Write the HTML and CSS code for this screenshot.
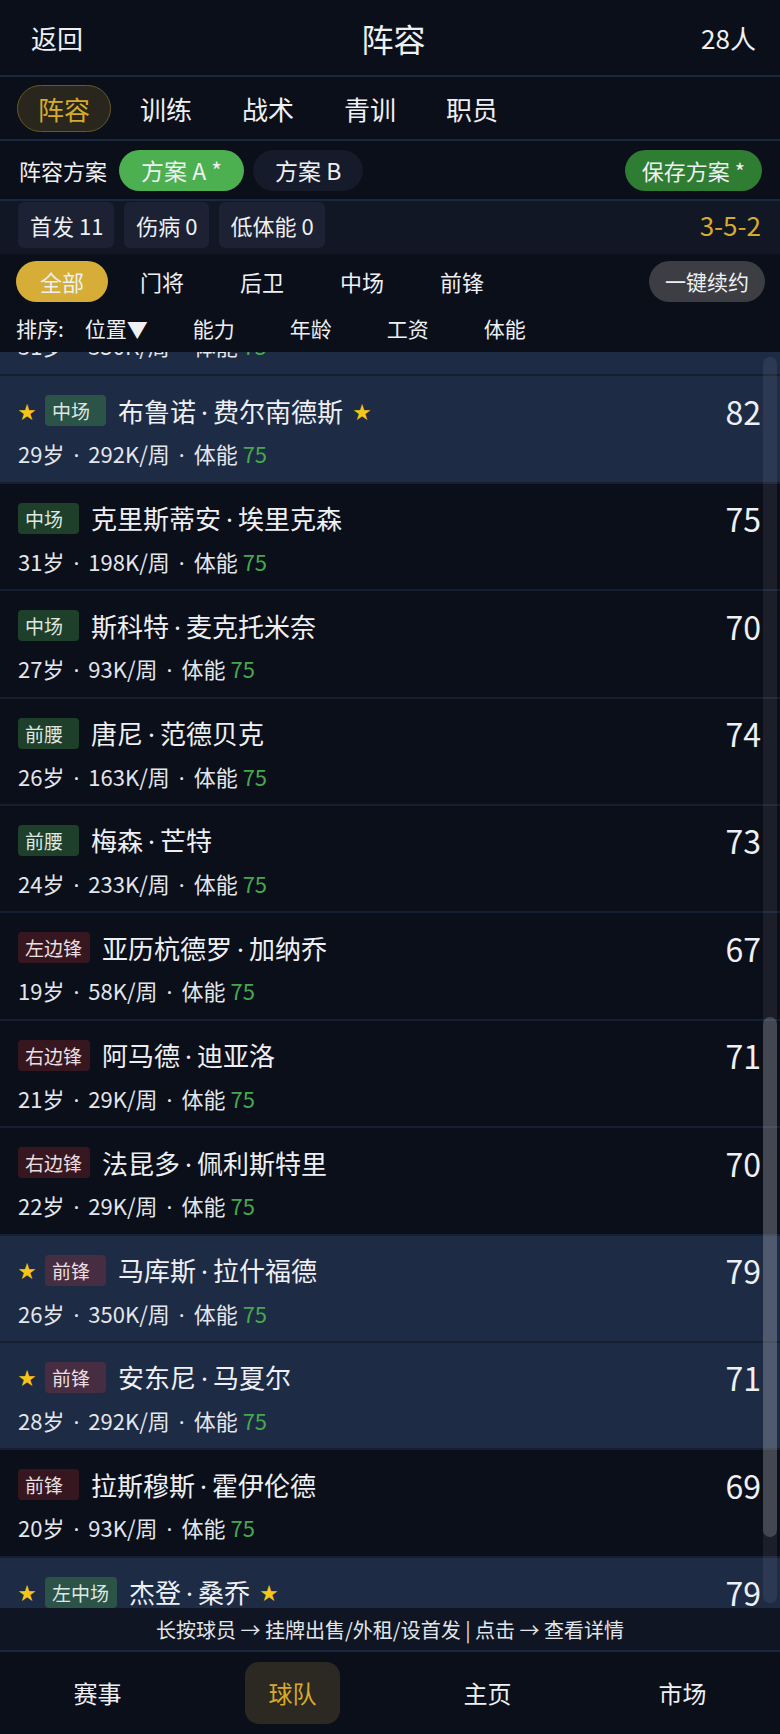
FILE: index.html
```html
<!DOCTYPE html>
<html lang="zh-CN">
<head>
    <meta charset="UTF-8">
    <meta name="viewport" content="width=device-width, initial-scale=1.0">
    <title>阵容</title>
    <link rel="stylesheet" href="styles.css">
</head>
<body>
<div class="app">
    <div class="header">
        <span class="back">返回</span>
        <span class="title">阵容</span>
        <span class="count">28人</span>
    </div>

    <div class="tabs">
        <span class="tab active">阵容</span>
        <span class="tab">训练</span>
        <span class="tab">战术</span>
        <span class="tab">青训</span>
        <span class="tab">职员</span>
    </div>

    <div class="scheme">
        <span class="scheme-label">阵容方案</span>
        <span class="plan on">方案 A *</span>
        <span class="plan">方案 B</span>
        <span class="save">保存方案 *</span>
    </div>

    <div class="stats">
        <span class="stat">首发 11</span>
        <span class="stat">伤病 0</span>
        <span class="stat">低体能 0</span>
        <span class="formation">3-5-2</span>
    </div>

    <div class="filters">
        <span class="filter active">全部</span>
        <span class="filter">门将</span>
        <span class="filter">后卫</span>
        <span class="filter">中场</span>
        <span class="filter">前锋</span>
        <span class="renew">一键续约</span>
    </div>

    <div class="sort">
        <span class="sort-label">排序:</span>
        <span class="sort-item first">位置▼</span>
        <span class="sort-item">能力</span>
        <span class="sort-item">年龄</span>
        <span class="sort-item">工资</span>
        <span class="sort-item">体能</span>
    </div>

    <div class="list">
        <!-- bottom of the row scrolled above -->
        <div class="row star partial">
            <div class="sub">31岁<b>·</b>350K/周<b>·</b>体能 <em>75</em></div>
        </div>
        <div class="row star">
            <div class="line"><span class="fav">★</span><span class="pos mid">中场</span><span class="name">布鲁诺<i>·</i>费尔南德斯</span><span class="fav">★</span><span class="ovr">82</span></div>
            <div class="sub">29岁<b>·</b>292K/周<b>·</b>体能 <em>75</em></div>
        </div>
        <div class="row">
            <div class="line"><span class="pos mid">中场</span><span class="name">克里斯蒂安<i>·</i>埃里克森</span><span class="ovr">75</span></div>
            <div class="sub">31岁<b>·</b>198K/周<b>·</b>体能 <em>75</em></div>
        </div>
        <div class="row">
            <div class="line"><span class="pos mid">中场</span><span class="name">斯科特<i>·</i>麦克托米奈</span><span class="ovr">70</span></div>
            <div class="sub">27岁<b>·</b>93K/周<b>·</b>体能 <em>75</em></div>
        </div>
        <div class="row">
            <div class="line"><span class="pos mid">前腰</span><span class="name">唐尼<i>·</i>范德贝克</span><span class="ovr">74</span></div>
            <div class="sub">26岁<b>·</b>163K/周<b>·</b>体能 <em>75</em></div>
        </div>
        <div class="row">
            <div class="line"><span class="pos mid">前腰</span><span class="name">梅森<i>·</i>芒特</span><span class="ovr">73</span></div>
            <div class="sub">24岁<b>·</b>233K/周<b>·</b>体能 <em>75</em></div>
        </div>
        <div class="row">
            <div class="line"><span class="pos fwd">左边锋</span><span class="name">亚历杭德罗<i>·</i>加纳乔</span><span class="ovr">67</span></div>
            <div class="sub">19岁<b>·</b>58K/周<b>·</b>体能 <em>75</em></div>
        </div>
        <div class="row">
            <div class="line"><span class="pos fwd">右边锋</span><span class="name">阿马德<i>·</i>迪亚洛</span><span class="ovr">71</span></div>
            <div class="sub">21岁<b>·</b>29K/周<b>·</b>体能 <em>75</em></div>
        </div>
        <div class="row">
            <div class="line"><span class="pos fwd">右边锋</span><span class="name">法昆多<i>·</i>佩利斯特里</span><span class="ovr">70</span></div>
            <div class="sub">22岁<b>·</b>29K/周<b>·</b>体能 <em>75</em></div>
        </div>
        <div class="row star">
            <div class="line"><span class="fav">★</span><span class="pos fwd">前锋</span><span class="name">马库斯<i>·</i>拉什福德</span><span class="ovr">79</span></div>
            <div class="sub">26岁<b>·</b>350K/周<b>·</b>体能 <em>75</em></div>
        </div>
        <div class="row star">
            <div class="line"><span class="fav">★</span><span class="pos fwd">前锋</span><span class="name">安东尼<i>·</i>马夏尔</span><span class="ovr">71</span></div>
            <div class="sub">28岁<b>·</b>292K/周<b>·</b>体能 <em>75</em></div>
        </div>
        <div class="row">
            <div class="line"><span class="pos fwd">前锋</span><span class="name">拉斯穆斯<i>·</i>霍伊伦德</span><span class="ovr">69</span></div>
            <div class="sub">20岁<b>·</b>93K/周<b>·</b>体能 <em>75</em></div>
        </div>
        <div class="row star">
            <div class="line"><span class="fav">★</span><span class="pos mid">左中场</span><span class="name">杰登<i>·</i>桑乔</span><span class="fav">★</span><span class="ovr">79</span></div>
        </div>
        <div class="scrollbar"><div class="thumb"></div></div>
    </div>

    <div class="hint">长按球员 → 挂牌出售/外租/设首发 | 点击 → 查看详情</div>

    <div class="nav">
        <span class="nav-item">赛事</span>
        <span class="nav-item active">球队</span>
        <span class="nav-item">主页</span>
        <span class="nav-item">市场</span>
    </div>
</div>
</body>
</html>
```

FILE: styles.css
```css
* {
    box-sizing: border-box;
}
body {
    margin: 0;
    background-color: #0b0f1a;
    color: #eef0f3;
    font-family: "Noto Sans CJK SC", "Noto Sans", sans-serif;
}
.app {
    width: 780px;
    height: 1734px;
    display: flex;
    flex-direction: column;
    overflow: hidden;
}

/* header */
.header {
    height: 77px;
    flex-shrink: 0;
    display: flex;
    align-items: center;
    justify-content: space-between;
    padding: 0 24px 0 31px;
    border-bottom: 2px solid #1b2740;
}
.back, .count {
    font-size: 26px;
    width: 90px;
}
.count {
    text-align: right;
}
.title {
    font-size: 32px;
}

/* tabs */
.tabs {
    height: 64px;
    flex-shrink: 0;
    display: flex;
    align-items: center;
    gap: 8px;
    padding: 0 17px;
    border-bottom: 2px solid #1b2740;
}
.tab {
    font-size: 26px;
    padding: 0 20px;
    line-height: 45px;
    border: 1px solid transparent;
    border-radius: 24px;
}
.tab.active {
    color: #d6ab2c;
    background-color: #29261d;
    border-color: #6a5726;
}

/* scheme row */
.scheme {
    height: 60px;
    flex-shrink: 0;
    display: flex;
    align-items: center;
    padding: 0 18px 0 19px;
    border-bottom: 2px solid #1b2740;
}
.scheme-label {
    font-size: 22px;
    margin-right: 12px;
}
.plan {
    font-size: 23px;
    line-height: 41px;
    padding: 0 22px;
    border-radius: 21px;
    background-color: #151b2a;
    margin-right: 9px;
}
.plan.on {
    background-color: #4caf50;
}
.save {
    margin-left: auto;
    font-size: 22px;
    line-height: 41px;
    padding: 0 17px;
    border-radius: 21px;
    background-color: #2e7d32;
}

/* stats */
.stats {
    height: 53px;
    flex-shrink: 0;
    display: flex;
    align-items: flex-start;
    gap: 10px;
    padding: 1px 19px 0 18px;
    background-color: #111725;
}
.stat {
    font-size: 22px;
    line-height: 46px;
    padding: 0 11px 0 12px;
    border-radius: 6px;
    background-color: #1c2233;
}
.formation {
    margin-left: auto;
    margin-top: 4px;
    font-size: 26px;
    color: #d6ab2c;
}

/* position filter */
.filters {
    height: 54px;
    flex-shrink: 0;
    display: flex;
    align-items: center;
    gap: 8px;
    padding: 0 15px 0 16px;
}
.filter {
    font-size: 22px;
    line-height: 41px;
    padding: 0 24px;
    border-radius: 21px;
}
.filter.active {
    background-color: #d5ad37;
}
.renew {
    margin-left: auto;
    font-size: 21px;
    line-height: 41px;
    padding: 0 16px;
    border-radius: 21px;
    background-color: #3c3e43;
}

/* sort */
.sort {
    height: 44px;
    flex-shrink: 0;
    display: flex;
    align-items: center;
    padding: 0 16px 4px;
    font-size: 21px;
}
.sort-label {
    margin-right: 21px;
}
.sort-item {
    margin-right: 55px;
}
.sort-item.first {
    margin-right: 45px;
}

/* player list */
.list {
    position: relative;
    height: 1256px;
    flex-shrink: 0;
    overflow: hidden;
}
.row {
    height: 107.4px;
    padding: 19px 19px 0 18px;
    border-bottom: 2px solid #161e31;
}
.row.star {
    background-color: #1e2b45;
}
.row.partial {
    height: 24.4px;
    padding-top: 0;
    overflow: hidden;
}
.row.partial .sub {
    margin-top: -21px;
}
.line {
    height: 31px;
    display: flex;
    align-items: center;
}
.fav {
    color: #f5c518;
    font-size: 18px;
    margin-right: 9px;
}
.name + .fav {
    margin-left: 10px;
}
.pos {
    min-width: 61px;
    height: 31px;
    line-height: 31px;
    padding: 0 8px 0 7px;
    font-size: 19px;
    border-radius: 4px;
    margin-right: 12px;
}
.pos.mid {
    color: #dfe7e2;
    background-color: rgba(76, 175, 80, 0.3);
}
.pos.fwd {
    color: #eadfe0;
    background-color: rgba(229, 57, 53, 0.2);
}
.name {
    font-size: 26px;
}
.name i {
    font-style: normal;
    font-family: "Noto Sans", sans-serif;
    margin: 0 5px;
}
.ovr {
    margin-left: auto;
    font-size: 32px;
}
.sub {
    margin-top: 13px;
    font-size: 22px;
    line-height: 28px;
    color: #e3e6ea;
}
.sub b {
    font-weight: normal;
    font-family: "Noto Sans", sans-serif;
    margin: 0 9px;
}
.sub em {
    font-style: normal;
    color: #46a84e;
}
.scrollbar {
    position: absolute;
    top: 5px;
    bottom: 5px;
    right: 3px;
    width: 14px;
    border-radius: 7px;
    background-color: rgba(255, 255, 255, 0.07);
}
.thumb {
    position: absolute;
    top: 660px;
    left: 0;
    right: 0;
    height: 520px;
    border-radius: 7px;
    background-color: rgba(170, 175, 185, 0.28);
}

/* hint + bottom nav */
.hint {
    height: 44px;
    flex-shrink: 0;
    display: flex;
    align-items: center;
    justify-content: center;
    font-size: 20px;
    color: #e2e5ea;
    background-color: #0f1522;
    border-bottom: 2px solid #1b2740;
}
.nav {
    flex: 1;
    display: grid;
    grid-template-columns: repeat(4, 1fr);
    align-items: center;
    justify-items: center;
}
.nav-item {
    font-size: 24px;
    width: 95px;
    line-height: 62px;
    text-align: center;
    border-radius: 14px;
}
.nav-item.active {
    color: #d6ab2c;
    background-color: #2b2921;
}
```
